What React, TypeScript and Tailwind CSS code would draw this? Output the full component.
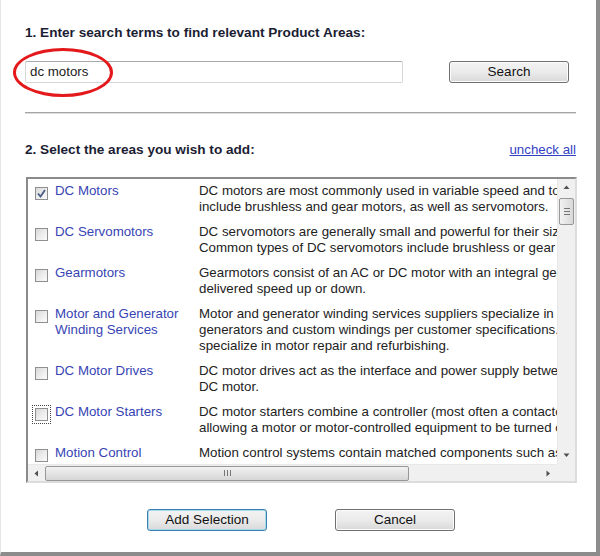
import React from "react";

type Area = {
    name: string[];
    desc: string[];
    checked?: boolean;
    focus?: boolean;
};

const areas: Area[] = [
    {
        name: ["DC Motors"],
        desc: [
            "DC motors are most commonly used in variable speed and torque control applications. Types",
            "include brushless and gear motors, as well as servomotors.",
        ],
        checked: true,
    },
    {
        name: ["DC Servomotors"],
        desc: [
            "DC servomotors are generally small and powerful for their size, and easy to control.",
            "Common types of DC servomotors include brushless or gear motor designs.",
        ],
    },
    {
        name: ["Gearmotors"],
        desc: [
            "Gearmotors consist of an AC or DC motor with an integral gearbox that steps the",
            "delivered speed up or down.",
        ],
    },
    {
        name: ["Motor and Generator", "Winding Services"],
        desc: [
            "Motor and generator winding services suppliers specialize in rewinding motors and",
            "generators and custom windings per customer specifications. Many suppliers also",
            "specialize in motor repair and refurbishing.",
        ],
    },
    {
        name: ["DC Motor Drives"],
        desc: [
            "DC motor drives act as the interface and power supply between the controller and the",
            "DC motor.",
        ],
    },
    {
        name: ["DC Motor Starters"],
        desc: [
            "DC motor starters combine a controller (most often a contactor) with overload protection,",
            "allowing a motor or motor-controlled equipment to be turned on and off safely.",
        ],
        focus: true,
    },
    {
        name: ["Motion Control", "Systems"],
        desc: [
            "Motion control systems contain matched components such as controllers, drives and",
            "motors, and provide precise control of position, velocity and torque for machines.",
        ],
    },
];

function CheckBox({ checked, focus }: { checked?: boolean; focus?: boolean }) {
    return (
        <span
            className={`flex items-center justify-center w-[13px] h-[13px] border border-[#8e8f8f] bg-gradient-to-br from-[#d8d8d8] via-[#ececec] to-[#fbfbfb] ${focus ? "outline-1 outline-dotted outline-[#444] outline-offset-[2px]" : ""}`}
        >
            {checked && (
                <svg width="11" height="11" viewBox="0 0 11 11">
                    <path d="M2 5.5 L4.5 8.5 L9 2" fill="none" stroke="#4b5d86" strokeWidth="1.8" />
                </svg>
            )}
        </span>
    );
}

function Arrow({ dir }: { dir: "up" | "down" | "left" | "right" }) {
    const pts = {
        up: "0.5,4 3.5,0.5 6.5,4",
        down: "0.5,0.5 3.5,4 6.5,0.5",
        left: "4,0.5 0.5,3.5 4,6.5",
        right: "0.5,0.5 4,3.5 0.5,6.5",
    }[dir];
    const w = dir === "up" || dir === "down" ? 7 : 5;
    const h = dir === "up" || dir === "down" ? 5 : 7;
    return (
        <svg width={w} height={h} viewBox={`0 0 ${w} ${h}`}>
            <polygon points={pts} fill="#505050" />
        </svg>
    );
}

function Button({ label, focused, className }: { label: string; focused?: boolean; className?: string }) {
    return (
        <button
            className={`h-[22px] w-[120px] rounded-[3px] border bg-gradient-to-b from-[#f3f3f3] via-[#ebebeb] to-[#d9d9d9] text-[13.5px] text-[#111] leading-none ${focused ? "border-[#3c7fb1] shadow-[inset_0_0_0_1px_#a8d8ef]" : "border-[#707070] shadow-[inset_0_0_0_1px_#fcfcfc]"} ${className ?? ""}`}
        >
            {label}
        </button>
    );
}

export default function App() {
    return (
        <div className="w-[600px] h-[556px] bg-white border-l border-l-[#e6e6e6] border-r-4 border-r-[#8c8c8c] border-b-4 border-b-[#8c8c8c] font-['Liberation_Sans',Arial,sans-serif] text-[13.3px] text-[#222] flex flex-col">
            {/* Step 1 */}
            <div className="pt-[25px] pl-[24px] h-[41px] leading-4 font-bold text-[13.6px] text-[#1b1d33]">
                1. Enter search terms to find relevant Product Areas:
            </div>
            <div className="flex items-center mt-[20px] pl-[24px]">
                <div className="relative">
                    <div className="w-[378px] h-[22px] border border-[#d6d6d6] border-t-[#a9a9a9] rounded-[2px] pl-[4px] flex items-center text-[#222]">
                        dc motors
                    </div>
                    <div className="absolute left-[-12px] top-[-13px] w-[100px] h-[49px] rounded-[50%] border-[3.5px] border-[#e3191c]" />
                </div>
                <Button label="Search" className="ml-[46px]" />
            </div>

            <div className="mt-[29px] ml-[24px] mr-[20px] h-[2px] border-t border-t-[#a5a5a5] border-b border-b-[#dedede]" />

            {/* Step 2 */}
            <div className="flex justify-between items-center mt-[28px] pl-[24px] pr-[20px] leading-4">
                <span className="font-bold text-[13.6px] text-[#1b1d33]">2. Select the areas you wish to add:</span>
                <span className="text-[#3340c4] underline">uncheck all</span>
            </div>

            <div className="mt-[19px] ml-[25px] w-[551px] h-[306px] border-2 border-t-[#8a8a8a] border-l-[#8a8a8a] border-r-[#dcdcdc] border-b-[#dcdcdc] flex flex-col">
                <div className="flex flex-1 min-h-0">
                    <div className="flex-1 overflow-hidden pt-[4px]">
                        {areas.map((a) => (
                            <div key={a.name[0]} className="flex mb-[9px] leading-4">
                                <div className="w-[27px] shrink-0 pl-[7px] pt-[4px]">
                                    <CheckBox checked={a.checked} focus={a.focus} />
                                </div>
                                <div className="w-[144px] shrink-0 text-[#3644b4]">
                                    {a.name.map((n) => (
                                        <div key={n}>{n}</div>
                                    ))}
                                </div>
                                <div className="whitespace-nowrap text-[#222]">
                                    {a.desc.map((d) => (
                                        <div key={d}>{d}</div>
                                    ))}
                                </div>
                            </div>
                        ))}
                    </div>
                    {/* vertical scrollbar */}
                    <div className="w-[18px] shrink-0 bg-[#f0f0f0] border-l border-l-[#e8e8e8] flex flex-col items-center">
                        <div className="h-[17px] flex items-center justify-center">
                            <Arrow dir="up" />
                        </div>
                        <div className="mt-[2px] w-[15px] h-[27px] rounded-[2px] border border-[#979797] bg-gradient-to-r from-[#f2f2f2] to-[#d8d8d8] flex flex-col items-center justify-center gap-[2px]">
                            <span className="w-[6px] h-[1px] bg-[#777]" />
                            <span className="w-[6px] h-[1px] bg-[#777]" />
                            <span className="w-[6px] h-[1px] bg-[#777]" />
                        </div>
                        <div className="flex-1" />
                        <div className="h-[17px] flex items-center justify-center">
                            <Arrow dir="down" />
                        </div>
                    </div>
                </div>
                {/* horizontal scrollbar */}
                <div className="h-[17px] shrink-0 flex">
                    <div className="flex-1 bg-[#f0f0f0] border-t border-t-[#e8e8e8] flex items-center">
                        <div className="w-[17px] flex items-center justify-center">
                            <Arrow dir="left" />
                        </div>
                        <div className="w-[364px] h-[15px] rounded-[2px] border border-[#979797] bg-gradient-to-b from-[#f2f2f2] to-[#d6d6d6] flex items-center justify-center gap-[2px]">
                            <span className="w-[1px] h-[6px] bg-[#777]" />
                            <span className="w-[1px] h-[6px] bg-[#777]" />
                            <span className="w-[1px] h-[6px] bg-[#777]" />
                        </div>
                        <div className="flex-1" />
                        <div className="w-[17px] flex items-center justify-center">
                            <Arrow dir="right" />
                        </div>
                    </div>
                    <div className="w-[18px] bg-[#f0f0f0]" />
                </div>
            </div>

            {/* Actions */}
            <div className="flex mt-[26px] pl-[146px] gap-[68px]">
                <Button label="Add Selection" focused />
                <Button label="Cancel" />
            </div>
        </div>
    );
}
